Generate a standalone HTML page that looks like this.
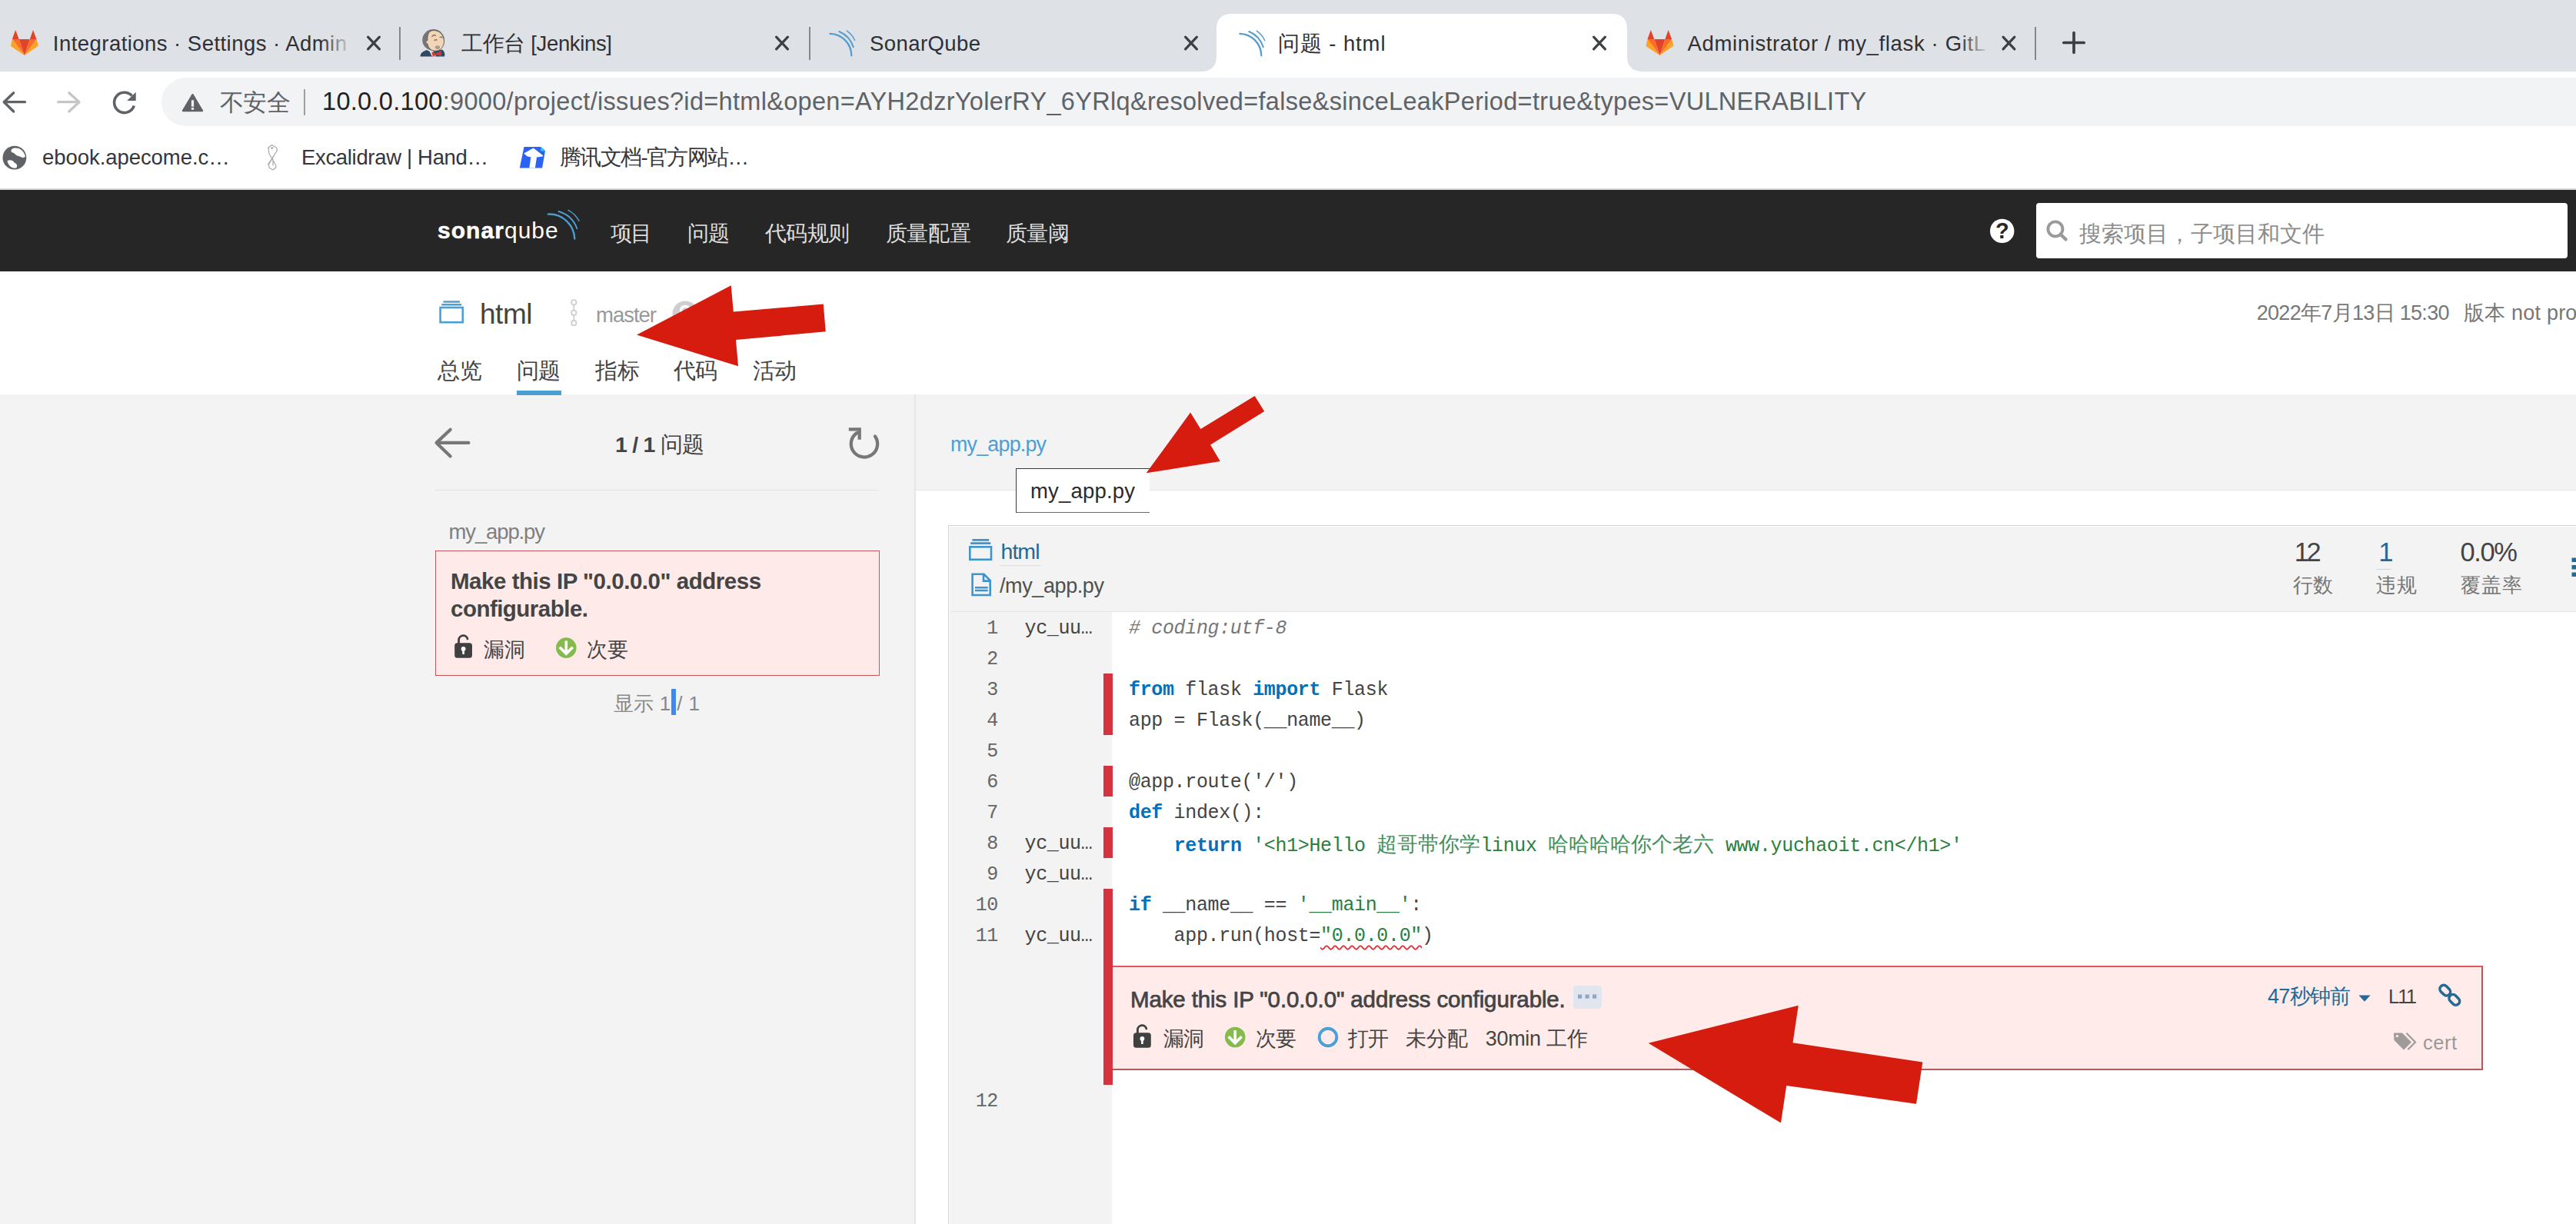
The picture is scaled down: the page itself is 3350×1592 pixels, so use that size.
<!DOCTYPE html>
<html lang="zh"><head><meta charset="utf-8"><title>问题 - html</title>
<style>
html,body{margin:0;padding:0;width:3350px;height:1592px;overflow:hidden}
body{background:#fff;font-family:"Liberation Sans",sans-serif}
.root{position:relative;width:3350px;height:1592px;overflow:hidden}
.t{position:absolute;white-space:pre;line-height:1}
.b{position:absolute;box-sizing:border-box}
svg{position:absolute;overflow:visible}
.cj{font-family:"Liberation Serif",serif;font-size:27px;letter-spacing:0;color:#43905a}
.sq{text-decoration:underline wavy #e0343c 1.5px;text-underline-offset:5px}
</style></head><body><div class="root">
<!-- ===== browser chrome ===== -->
<div class="b" style="left:0;top:0;width:3350px;height:93px;background:#dee1e6"></div>
<svg style="left:0;top:0" width="3350" height="94"><path d="M1562 93 Q1582 93 1582 73 L1582 38 Q1582 18 1602 18 L2096 18 Q2116 18 2116 38 L2116 73 Q2116 93 2136 93 Z" fill="#fff"/></svg>
<div class="b" style="left:519px;top:35px;width:2px;height:43px;background:#84888d"></div>
<div class="b" style="left:1052px;top:35px;width:2px;height:43px;background:#84888d"></div>
<div class="b" style="left:2646px;top:35px;width:2px;height:43px;background:#84888d"></div>
<!-- omnibox -->
<div class="b" style="left:210px;top:101px;width:3300px;height:63px;border-radius:32px;background:#f1f3f4"></div>
<div class="b" style="left:394.5px;top:116px;width:2px;height:34px;background:#9aa0a6"></div>
<div class="b" style="left:0;top:245px;width:3350px;height:2px;background:#d9d9d9"></div>
<!-- ===== sonarqube nav ===== -->
<div class="b" style="left:0;top:247px;width:3350px;height:106px;background:#262626"></div>
<div class="b" style="left:2648px;top:264px;width:691px;height:72px;border-radius:4px;background:#fff"></div>
<!-- ===== page bg ===== -->
<div class="b" style="left:0;top:513px;width:3350px;height:1079px;background:#f3f3f3"></div>
<div class="b" style="left:1190px;top:637px;width:2160px;height:955px;background:#fff;border-top:1.5px solid #e4e4e4"></div>
<div class="b" style="left:1189px;top:513px;width:1.5px;height:1079px;background:#e6e6e6"></div>
<div class="b" style="left:671.5px;top:507.5px;width:58px;height:6px;background:#4b9fd5"></div>
<!-- left panel -->
<div class="b" style="left:566px;top:636.5px;width:577px;height:1.5px;background:#e2e2e2"></div>
<div class="b" style="left:566px;top:716px;width:578px;height:163px;background:#ffeaea;border:1.5px solid #c8565a"></div>
<div class="b" style="left:872.5px;top:896px;width:6.5px;height:34px;background:#3d8af2"></div>
<!-- source viewer -->
<div class="b" style="left:1233px;top:683px;width:2200px;height:1000px;background:#fff;border:1.5px solid #d4d4d4"></div>
<div class="b" style="left:1234.5px;top:684.5px;width:2200px;height:111px;background:#f3f3f3;border-bottom:1.5px solid #e6e6e6"></div>
<div class="b" style="left:1234.5px;top:795.5px;width:211.5px;height:800px;background:#f3f3f3"></div>
<div class="b" style="left:1435px;top:876px;width:11.5px;height:80px;background:#d4333f"></div>
<div class="b" style="left:1435px;top:996px;width:11.5px;height:40px;background:#d4333f"></div>
<div class="b" style="left:1435px;top:1076px;width:11.5px;height:40px;background:#d4333f"></div>
<div class="b" style="left:1435px;top:1156px;width:11.5px;height:255px;background:#d4333f"></div>
<div class="b" style="left:1446.5px;top:1256px;width:1782.5px;height:136px;background:#ffebe9;border-top:2.6px solid #e2565c;border-right:2.2px solid #b5575b;border-bottom:2.2px solid #b5575b"></div>
<div class="b" style="left:2045.5px;top:1281.5px;width:37.5px;height:30px;border-radius:4px;background:#e1e5ee"></div>
<!-- tooltip -->
<div class="b" style="left:1321px;top:609px;width:174px;height:57.5px;background:#fff;border:1.5px solid #3a3a3a;border-bottom-color:#6a6a6a;border-right:none"></div>
<svg style="left:0;top:0" width="3350" height="1592" fill="none" stroke-linecap="round" stroke-linejoin="round">
<defs>
<g id="gitlab" stroke="none">
<polygon points="24.7,51 38.8,51 31.9,72" fill="#e24329"/>
<polygon points="15.9,51 24.7,51 31.9,72" fill="#fc6d26"/>
<polygon points="38.8,51 47.5,51 31.9,72" fill="#fc6d26"/>
<polygon points="15.9,51 13.9,60 31.9,72" fill="#fca326"/>
<polygon points="47.5,51 49.9,59.5 31.9,72" fill="#fca326"/>
<polygon points="20.2,39.1 15.9,51 24.7,51" fill="#e24329"/>
<polygon points="43,39 38.8,51 47.5,51" fill="#e24329"/>
</g>
<g id="sonarfav" stroke="#549dd0">
<path d="M1079.4 43.8 A28.5 28.5 0 0 1 1107.3 72.3" stroke-width="2.3"/>
<path d="M1091.3 41 A33 33 0 0 1 1109.9 61.4" stroke-width="1.9"/>
<path d="M1101.3 40.2 A30 30 0 0 1 1111.7 52.5" stroke-width="1.5"/>
</g>
<g id="tabx" stroke="#3c4043" stroke-width="3.2"><path d="M-7.4 -7.8 L7.4 7.8 M7.4 -7.8 L-7.4 7.8"/></g>
<g id="lock" stroke="none">
<path d="M596.6 838 V832 A5.8 5.8 0 0 1 608 831" stroke="#404040" stroke-width="2.8" fill="none"/>
<rect x="591.2" y="836.2" width="22.8" height="19.6" rx="3.5" fill="#404040"/>
<circle cx="602.6" cy="844" r="2.9" fill="#fff"/><rect x="601.3" y="844" width="2.6" height="7" fill="#fff"/>
</g>
<g id="minor" stroke="none">
<circle cx="736.3" cy="842.6" r="13.3" fill="#84bb4c"/>
<path d="M736.3 833.5 V849 M727.8 841.8 L736.3 850.3 L744.8 841.8" stroke="#fff" stroke-width="3.6" fill="none" stroke-linecap="butt" stroke-linejoin="miter"/>
</g>
<g id="proj" stroke="#3d94cf" stroke-width="2.6" stroke-linecap="butt" stroke-linejoin="miter">
<rect x="1261.3" y="711.3" width="27.7" height="16.5"/><path d="M1264.4 702.4 H1286.1 M1262.2 706.6 H1288.3"/>
</g>
</defs>
<!-- favicons -->
<use href="#gitlab"/><use href="#gitlab" x="2126.6"/>
<use href="#sonarfav"/><use href="#sonarfav" x="533"/>
<!-- jenkins -->
<g stroke="none">
<path d="M546.5 73.6 C546.7 69.1 550.2 67.0 555.0 65.1 L559.7 67.5 L575.1 64.6 C577.8 67.0 579.1 69.6 578.1 73.6 Z" fill="#2f4b63"/>
<path d="M558.7 67.0 L561.9 73.6 L567.2 73.6 L562.9 67.0 Z" fill="#e9e4dc"/>
<path d="M561.3 67.5 L567.2 69.6 L573.5 65.9 L574.1 72.8 L568.2 71.2 L562.9 73.6 Z" fill="#d33833"/>
<ellipse cx="563.6" cy="52.0" rx="14.4" ry="13.9" fill="#77757a"/>
<path d="M559.7 40.4 C567.2 37.2 576.7 42.5 577.5 52.6 C577.8 61.1 572.5 66.4 566.1 66.2 C559.7 65.9 556.6 61.6 556.0 56.9 C553.4 56.9 552.8 53.1 556.0 52.6 C555.5 47.3 556.6 42.5 559.7 40.4 Z" fill="#f0d6b7" stroke="#5b5555" stroke-width="0.9"/>
<ellipse cx="569.0" cy="61.6" rx="3.1" ry="2.4" fill="#a89c8c"/>
<path d="M561.9 47.3 Q564.0 44.6 566.6 46.2 M565.1 52.6 Q566.6 51.0 568.2 52.1 M572.0 48.4 Q574.1 47.3 575.1 48.9" stroke="#6b5a4a" stroke-width="1.1" fill="none"/>
</g>
<!-- tab close / new tab -->
<use href="#tabx" x="486" y="56"/><use href="#tabx" x="1017" y="56"/><use href="#tabx" x="1549" y="56"/><use href="#tabx" x="2080" y="56"/><use href="#tabx" x="2612.4" y="56"/>
<path d="M2683.8 55.5 H2710.2 M2697 42.6 V68.3" stroke="#3c4043" stroke-width="3.7"/>
<!-- toolbar -->
<path d="M32.4 132.7 H5.6 M17.7 120.8 L5.2 132.7 L17.7 145" stroke="#5f6368" stroke-width="3.3"/>
<path d="M75.7 132.7 H102.6 M89.8 120.8 L103 132.7 L89.8 145" stroke="#c4c6c8" stroke-width="3.3"/>
<path d="M171.5 124.5 A13.2 13.2 0 1 0 174.3 137.5" stroke="#5f6368" stroke-width="3.6" stroke-linecap="butt"/>
<polygon points="176.7,119.8 176.7,131 165.2,131" fill="#5f6368" stroke="none"/>
<path d="M250.5 123.2 L263 144 H238 Z" fill="#5f6368" stroke="#5f6368" stroke-width="2.4"/>
<path d="M250.5 130.3 V138.7 M250.5 140.1 V142.7" stroke="#f1f3f4" stroke-width="3.2" stroke-linecap="butt"/>
<!-- bookmark icons -->
<circle cx="18.9" cy="205.2" r="15.4" fill="#5f6368" stroke="none"/>
<path d="M17.2 192.9 C24.6 190.9 31.5 196.1 32.9 203.5 C30.0 206.9 26.9 203.5 23.4 202.7 C19.7 202.0 19.7 198.6 15.1 197.9 C13.7 195.2 15.2 193.8 17.2 192.9Z M9.4 209.2 C12.4 207.3 17.2 208.4 18.5 211.5 C21.5 212.7 23.2 214.7 21.5 218.2 C17.2 219.9 11.2 216.9 9.4 209.2Z" fill="#fff" stroke="none"/>
<g stroke="#a9a9a9" stroke-width="1.2"><path d="M348.3 192.4 L353.6 188.5 L359.5 192 L360.6 195.5 L348.5 214 M349 192.5 L350 200 L358.5 214.5 L359 217.5 L355 221 L350 218 L349.5 214 L360.4 195.5 M355 207 L355 215"/><circle cx="353.7" cy="192.5" r="1"/></g>
<g stroke="none"><path d="M681.5 191 H703.5 L709 196 L705.1 218.5 H675.8 Z" fill="#2a62f3"/><path d="M703 191 L709 196.5 L703 196.5Z" fill="#22d3ee"/>
<path d="M681.2 199.5 L693.7 192.4 L706.2 202.2 L706 203.6 L698 204.4 L695.9 218.5 H688.3 L690.4 204.4 L685.5 203.3 Z" fill="#fff"/></g>
<!-- sonarqube logo waves -->
<g stroke="#4e9bcd"><path d="M712.8 278.6 A33 33 0 0 1 747.3 310.5" stroke-width="2.4"/><path d="M726.5 275 A36 36 0 0 1 750.4 297.3" stroke-width="1.9"/><path d="M739 273.4 A34 34 0 0 1 753 287.3" stroke-width="1.5"/></g>
<!-- help + search -->
<circle cx="2603.7" cy="300.4" r="15.7" fill="#fff" stroke="none"/>
<circle cx="2672.9" cy="297.9" r="9.5" stroke="#9a9a9a" stroke-width="3.9"/><path d="M2680.4 305.6 L2686.6 311.4" stroke="#9a9a9a" stroke-width="4.2"/>
<!-- project header icons -->
<g stroke="#4b9fd5" stroke-width="2.6" stroke-linecap="butt" stroke-linejoin="miter"><rect x="572.6" y="400" width="29.2" height="19.2"/><path d="M576.5 392.5 H598 M574.3 396.3 H600.2"/></g>
<g stroke="#cfcfcf" stroke-width="1.8"><circle cx="746.3" cy="393.3" r="3.2"/><circle cx="746.3" cy="406.8" r="3.2"/><circle cx="746.3" cy="420.2" r="3.2"/><path d="M746.3 396.5 V403.6 M746.3 410 V417"/></g>
<circle cx="891" cy="408" r="16.5" fill="#cfcfcf" stroke="none"/><circle cx="891" cy="404" r="5.5" stroke="#fff" stroke-width="3.5"/>
<!-- left panel icons -->
<path d="M609.4 575.9 H568.6 M585.7 558.8 L567.6 575.9 L585.7 593.4" stroke="#777" stroke-width="4.2"/>
<path d="M1138 567.4 A17.2 17.2 0 1 1 1114.6 562.9" stroke="#777" stroke-width="4.3"/>
<path d="M1103.8 558.3 H1117.7 V571.8" stroke="#777" stroke-width="4.3" stroke-linecap="butt" stroke-linejoin="miter"/>
<use href="#lock"/><use href="#minor"/>
<!-- source viewer icons -->
<use href="#proj"/>
<g stroke="#3d94cf" stroke-width="2.6" stroke-linecap="butt" stroke-linejoin="miter"><path d="M1264.6 746.8 H1279.6 L1287.7 755 V774 H1264.6 Z M1279 747 V755.6 H1287.5 M1268 764.2 H1284.7 M1268 768 H1284.7"/></g>
<path d="M1301 735.7 H1353" stroke="#dcdcdc" stroke-width="1"/>
<path d="M3091 740.5 H3109" stroke="#c9d6e0" stroke-width="1"/>
<g fill="#236a97" stroke="none"><rect x="3344.5" y="725.5" width="6" height="5.5"/><rect x="3344.5" y="735" width="6" height="5.5"/><rect x="3344.5" y="744.5" width="6" height="5.5"/></g>
<!-- issue box icons -->
<use href="#lock" x="882.8" y="507"/><use href="#minor" x="869.9" y="506.4"/>
<circle cx="1727" cy="1349" r="11.3" stroke="#4b9fd5" stroke-width="3.9"/>
<g fill="#8da7c4" stroke="none"><rect x="2052" y="1293.5" width="5.2" height="5.2"/><rect x="2061.5" y="1293.5" width="5.2" height="5.2"/><rect x="2071" y="1293.5" width="5.2" height="5.2"/></g>
<polygon points="3067.5,1294.4 3082.6,1294.4 3075,1302.8" fill="#236a97" stroke="none"/>
<g stroke="#236a97" stroke-width="3.5"><rect x="-7.6" y="-5" width="15.2" height="10" rx="5" transform="translate(3179.8 1288.2) rotate(45)"/><rect x="-7.6" y="-5" width="15.2" height="10" rx="5" transform="translate(3191.8 1300.4) rotate(45)"/></g>
<g stroke="none" fill="#a19a9a"><path d="M3113 1343.5 H3124 L3136 1355.5 L3126 1365.5 L3113.5 1353 Z"/><circle cx="3117.4" cy="1347.6" r="1.7" fill="#ffeaea"/></g>
<path d="M3129.5 1343.8 L3141 1355.5 L3131.5 1365" stroke="#a19a9a" stroke-width="2.2" stroke-linecap="butt" stroke-linejoin="miter"/>
</svg>

<div class="t" style="left:68.8px;top:43.0px;font-size:27.5px;color:#2f3034;letter-spacing:0.46px;">Integrations · Settings · Admin</div>
<div class="t" style="left:600.0px;top:43.0px;font-size:27.5px;color:#2f3034;letter-spacing:-0.35px;">工作台 [Jenkins]</div>
<div class="t" style="left:1131.0px;top:43.0px;font-size:27.5px;color:#2f3034;letter-spacing:0.42px;">SonarQube</div>
<div class="t" style="left:1662.0px;top:43.0px;font-size:27.5px;color:#2f3034;letter-spacing:0.89px;">问题 - html</div>
<div class="t" style="left:2194.5px;top:43.0px;font-size:27.5px;color:#2f3034;letter-spacing:0.64px;">Administrator / my_flask · GitL</div>
<div class="t" style="left:286.0px;top:117.7px;font-size:30.5px;color:#5f6368;letter-spacing:-0.75px;">不安全</div>
<div class="t" style="left:419.0px;top:115.7px;font-size:32.5px;color:#5f6368;letter-spacing:0.31px;"><span style="color:#202124">10.0.0.100</span>:9000/project/issues?id=html&amp;open=AYH2dzrYolerRY_6YRlq&amp;resolved=false&amp;sinceLeakPeriod=true&amp;types=VULNERABILITY</div>
<div class="t" style="left:55.0px;top:191.2px;font-size:27.5px;color:#35363a;letter-spacing:-0.06px;">ebook.apecome.c…</div>
<div class="t" style="left:392.0px;top:191.2px;font-size:27.5px;color:#35363a;letter-spacing:-0.33px;">Excalidraw | Hand…</div>
<div class="t" style="left:728.0px;top:191.2px;font-size:27.5px;color:#35363a;letter-spacing:-1.63px;">腾讯文档-官方网站…</div>
<div class="t" style="left:794.0px;top:290.2px;font-size:27.5px;color:#dedede;letter-spacing:-2.0px;">项目</div>
<div class="t" style="left:894.0px;top:290.2px;font-size:27.5px;color:#dedede;letter-spacing:-1.0px;">问题</div>
<div class="t" style="left:995.0px;top:290.2px;font-size:27.5px;color:#dedede;letter-spacing:-0.67px;">代码规则</div>
<div class="t" style="left:1151.5px;top:290.2px;font-size:27.5px;color:#dedede;letter-spacing:-0.33px;">质量配置</div>
<div class="t" style="left:1307.5px;top:290.2px;font-size:27.5px;color:#dedede;letter-spacing:-0.25px;">质量阈</div>
<div class="t" style="left:2704.0px;top:290.4px;font-size:28.5px;color:#8c8c8c;">搜索项目，子项目和文件</div>
<div class="t" style="left:624.0px;top:389.7px;font-size:37px;color:#444;letter-spacing:-0.47px;">html</div>
<div class="t" style="left:775.0px;top:395.7px;font-size:27.5px;color:#999;letter-spacing:-1.01px;">master</div>
<div class="t" style="left:569.0px;top:467.5px;font-size:29px;color:#444;letter-spacing:-0.5px;">总览</div>
<div class="t" style="left:671.5px;top:467.5px;font-size:29px;color:#444;letter-spacing:-0.5px;">问题</div>
<div class="t" style="left:774.0px;top:467.5px;font-size:29px;color:#444;letter-spacing:-0.5px;">指标</div>
<div class="t" style="left:876.0px;top:467.5px;font-size:29px;color:#444;letter-spacing:-1.0px;">代码</div>
<div class="t" style="left:978.5px;top:467.5px;font-size:29px;color:#444;letter-spacing:-0.5px;">活动</div>
<div class="t" style="left:2934.7px;top:393.8px;font-size:27px;color:#777;letter-spacing:-0.69px;">2022年7月13日 15:30</div>
<div class="t" style="left:3204.0px;top:393.8px;font-size:27px;color:#777;letter-spacing:0.2px;">版本 not provided</div>
<div class="t" style="left:800.0px;top:564.4px;font-size:28.5px;color:#444;letter-spacing:-0.77px;"><b>1 / 1</b> 问题</div>
<div class="t" style="left:583.5px;top:677.7px;font-size:27.5px;color:#808080;letter-spacing:-1.13px;">my_app.py</div>
<div class="t" style="left:586.0px;top:741.0px;font-size:29.5px;color:#444;font-weight:700;letter-spacing:-0.47px;">Make this IP &quot;0.0.0.0&quot; address</div>
<div class="t" style="left:586.0px;top:777.0px;font-size:29.5px;color:#444;font-weight:700;letter-spacing:-0.52px;">configurable.</div>
<div class="t" style="left:629.0px;top:832.1px;font-size:27px;color:#444;letter-spacing:-0.5px;">漏洞</div>
<div class="t" style="left:762.5px;top:832.1px;font-size:27px;color:#444;">次要</div>
<div class="t" style="left:797.5px;top:902.0px;font-size:26px;color:#888;letter-spacing:0.38px;">显示 1 / 1</div>
<div class="t" style="left:1236.0px;top:565.0px;font-size:26.8px;color:#4b9fd5;letter-spacing:-0.76px;">my_app.py</div>
<div class="t" style="left:1340.0px;top:624.5px;font-size:27.5px;color:#2b2b2b;letter-spacing:0.18px;">my_app.py</div>
<div class="t" style="left:1301.5px;top:703.4px;font-size:28.5px;color:#236a97;letter-spacing:-0.95px;">html</div>
<div class="t" style="left:1300.0px;top:748.6px;font-size:27px;color:#505050;letter-spacing:-0.4px;">/my_app.py</div>
<div class="t" style="left:2983.8px;top:701.2px;font-size:34.5px;color:#444;letter-spacing:-3.38px;">12</div>
<div class="t" style="left:3093.3px;top:701.2px;font-size:34.5px;color:#236a97;">1</div>
<div class="t" style="left:3199.5px;top:701.2px;font-size:34.5px;color:#444;letter-spacing:-1.38px;">0.0%</div>
<div class="t" style="left:2982.0px;top:747.5px;font-size:26px;color:#777;letter-spacing:0.3px;">行数</div>
<div class="t" style="left:3090.4px;top:747.5px;font-size:26px;color:#777;letter-spacing:0.6px;">违规</div>
<div class="t" style="left:3199.5px;top:747.5px;font-size:26px;color:#777;letter-spacing:1.0px;">覆盖率</div>
<div class="t" style="left:1470.0px;top:1285.0px;font-size:29.5px;color:#444;letter-spacing:-0.13px;-webkit-text-stroke:0.75px #444;">Make this IP &quot;0.0.0.0&quot; address configurable.</div>
<div class="t" style="left:1512.5px;top:1337.6px;font-size:27px;color:#444;letter-spacing:-0.5px;">漏洞</div>
<div class="t" style="left:1632.7px;top:1337.6px;font-size:27px;color:#444;letter-spacing:-0.9px;">次要</div>
<div class="t" style="left:1753.4px;top:1337.6px;font-size:27px;color:#444;letter-spacing:-1.4px;">打开</div>
<div class="t" style="left:1828.0px;top:1337.6px;font-size:27px;color:#444;letter-spacing:-0.25px;">未分配</div>
<div class="t" style="left:1931.8px;top:1337.6px;font-size:27px;color:#444;letter-spacing:-0.32px;">30min 工作</div>
<div class="t" style="left:2949.0px;top:1282.6px;font-size:27px;color:#236a97;letter-spacing:-0.66px;">47秒钟前</div>
<div class="t" style="left:3106.0px;top:1283.9px;font-size:25.5px;color:#444;letter-spacing:-1.83px;">L11</div>
<div class="t" style="left:3151.0px;top:1344.0px;font-size:25.5px;color:#999;letter-spacing:0.49px;">cert</div>
<div class="t" style="left:1283.3px;top:805.1px;font-size:25px;color:#666;font-family:'Liberation Mono', monospace;letter-spacing:-0.35px;">1</div>
<div class="t" style="left:1468.0px;top:805.1px;font-size:25px;color:#444;font-family:'Liberation Mono', monospace;letter-spacing:-0.35px;"><i style="color:#777"># coding:utf-8</i></div>
<div class="t" style="left:1283.3px;top:845.1px;font-size:25px;color:#666;font-family:'Liberation Mono', monospace;letter-spacing:-0.35px;">2</div>
<div class="t" style="left:1283.3px;top:885.1px;font-size:25px;color:#666;font-family:'Liberation Mono', monospace;letter-spacing:-0.35px;">3</div>
<div class="t" style="left:1468.0px;top:885.1px;font-size:25px;color:#444;font-family:'Liberation Mono', monospace;letter-spacing:-0.35px;"><b style="color:#0071ba">from</b> flask <b style="color:#0071ba">import</b> Flask</div>
<div class="t" style="left:1283.3px;top:925.1px;font-size:25px;color:#666;font-family:'Liberation Mono', monospace;letter-spacing:-0.35px;">4</div>
<div class="t" style="left:1468.0px;top:925.1px;font-size:25px;color:#444;font-family:'Liberation Mono', monospace;letter-spacing:-0.35px;">app = Flask(__name__)</div>
<div class="t" style="left:1283.3px;top:965.1px;font-size:25px;color:#666;font-family:'Liberation Mono', monospace;letter-spacing:-0.35px;">5</div>
<div class="t" style="left:1283.3px;top:1005.1px;font-size:25px;color:#666;font-family:'Liberation Mono', monospace;letter-spacing:-0.35px;">6</div>
<div class="t" style="left:1468.0px;top:1005.1px;font-size:25px;color:#444;font-family:'Liberation Mono', monospace;letter-spacing:-0.35px;">@app.route('/')</div>
<div class="t" style="left:1283.3px;top:1045.1px;font-size:25px;color:#666;font-family:'Liberation Mono', monospace;letter-spacing:-0.35px;">7</div>
<div class="t" style="left:1468.0px;top:1045.1px;font-size:25px;color:#444;font-family:'Liberation Mono', monospace;letter-spacing:-0.35px;"><b style="color:#0071ba">def</b> index():</div>
<div class="t" style="left:1283.3px;top:1085.1px;font-size:25px;color:#666;font-family:'Liberation Mono', monospace;letter-spacing:-0.35px;">8</div>
<div class="t" style="left:1468.0px;top:1085.1px;font-size:25px;color:#444;font-family:'Liberation Mono', monospace;letter-spacing:-0.35px;">    <b style="color:#0071ba">return</b> <span style="color:#2a7f40">'&lt;h1&gt;Hello <span class="cj">超哥带你学</span>linux <span class="cj">哈哈哈哈你个老六</span> www.yuchaoit.cn&lt;/h1&gt;'</span></div>
<div class="t" style="left:1283.3px;top:1125.1px;font-size:25px;color:#666;font-family:'Liberation Mono', monospace;letter-spacing:-0.35px;">9</div>
<div class="t" style="left:1268.7px;top:1165.1px;font-size:25px;color:#666;font-family:'Liberation Mono', monospace;letter-spacing:-0.35px;">10</div>
<div class="t" style="left:1468.0px;top:1165.1px;font-size:25px;color:#444;font-family:'Liberation Mono', monospace;letter-spacing:-0.35px;"><b style="color:#0071ba">if</b> __name__ == <span style="color:#2a7f40">'__main__'</span>:</div>
<div class="t" style="left:1268.7px;top:1205.1px;font-size:25px;color:#666;font-family:'Liberation Mono', monospace;letter-spacing:-0.35px;">11</div>
<div class="t" style="left:1468.0px;top:1205.1px;font-size:25px;color:#444;font-family:'Liberation Mono', monospace;letter-spacing:-0.35px;">    app.run(host=<span style="color:#2a7f40"><span class="sq">"0.0.0.0"</span></span>)</div>
<div class="t" style="left:1268.7px;top:1420.1px;font-size:25px;color:#666;font-family:'Liberation Mono', monospace;letter-spacing:-0.35px;">12</div>
<div class="t" style="left:1332.5px;top:805.1px;font-size:25px;color:#444;font-family:'Liberation Mono', monospace;letter-spacing:-0.35px;">yc_uu…</div>
<div class="t" style="left:1332.5px;top:1085.1px;font-size:25px;color:#444;font-family:'Liberation Mono', monospace;letter-spacing:-0.35px;">yc_uu…</div>
<div class="t" style="left:1332.5px;top:1125.1px;font-size:25px;color:#444;font-family:'Liberation Mono', monospace;letter-spacing:-0.35px;">yc_uu…</div>
<div class="t" style="left:1332.5px;top:1205.1px;font-size:25px;color:#444;font-family:'Liberation Mono', monospace;letter-spacing:-0.35px;">yc_uu…</div>
<div class="t" style="left:569.0px;top:285.4px;font-size:30px;color:#fff;letter-spacing:1.04px;"><b style="-webkit-text-stroke:0.5px #fff">sonar</b>qube</div>
<div class="t" style="left:2595.1px;top:286.2px;font-size:29px;color:#262626;font-weight:700;">?</div>
<!-- fades for truncated tab titles -->
<div class="b" style="left:418px;top:36px;width:40px;height:44px;background:linear-gradient(90deg,rgba(222,225,230,0),#dee1e6)"></div>
<div class="b" style="left:2548px;top:36px;width:40px;height:44px;background:linear-gradient(90deg,rgba(222,225,230,0),#dee1e6)"></div>
<!-- red annotation arrows -->
<svg style="left:0;top:0" width="3350" height="1592">
<polygon points="828,435.5 950.75,371.25 953.75,405.5 1070.75,395.5 1073.75,431.25 957,442 960,476.25" fill="#d61b0f"/>
<polygon points="1490.7,615.3 1548.1,536.6 1561.4,557.9 1631.7,515.1 1644.2,535.1 1574.1,578.6 1586.8,599.9" fill="#d61b0f"/>
<polygon points="2143.7,1356.7 2338.7,1307.7 2331.5,1356.3 2500.3,1381.5 2492,1435.8 2323.2,1412 2316,1460.6" fill="#d61b0f"/>
</svg>
</div></body></html>
